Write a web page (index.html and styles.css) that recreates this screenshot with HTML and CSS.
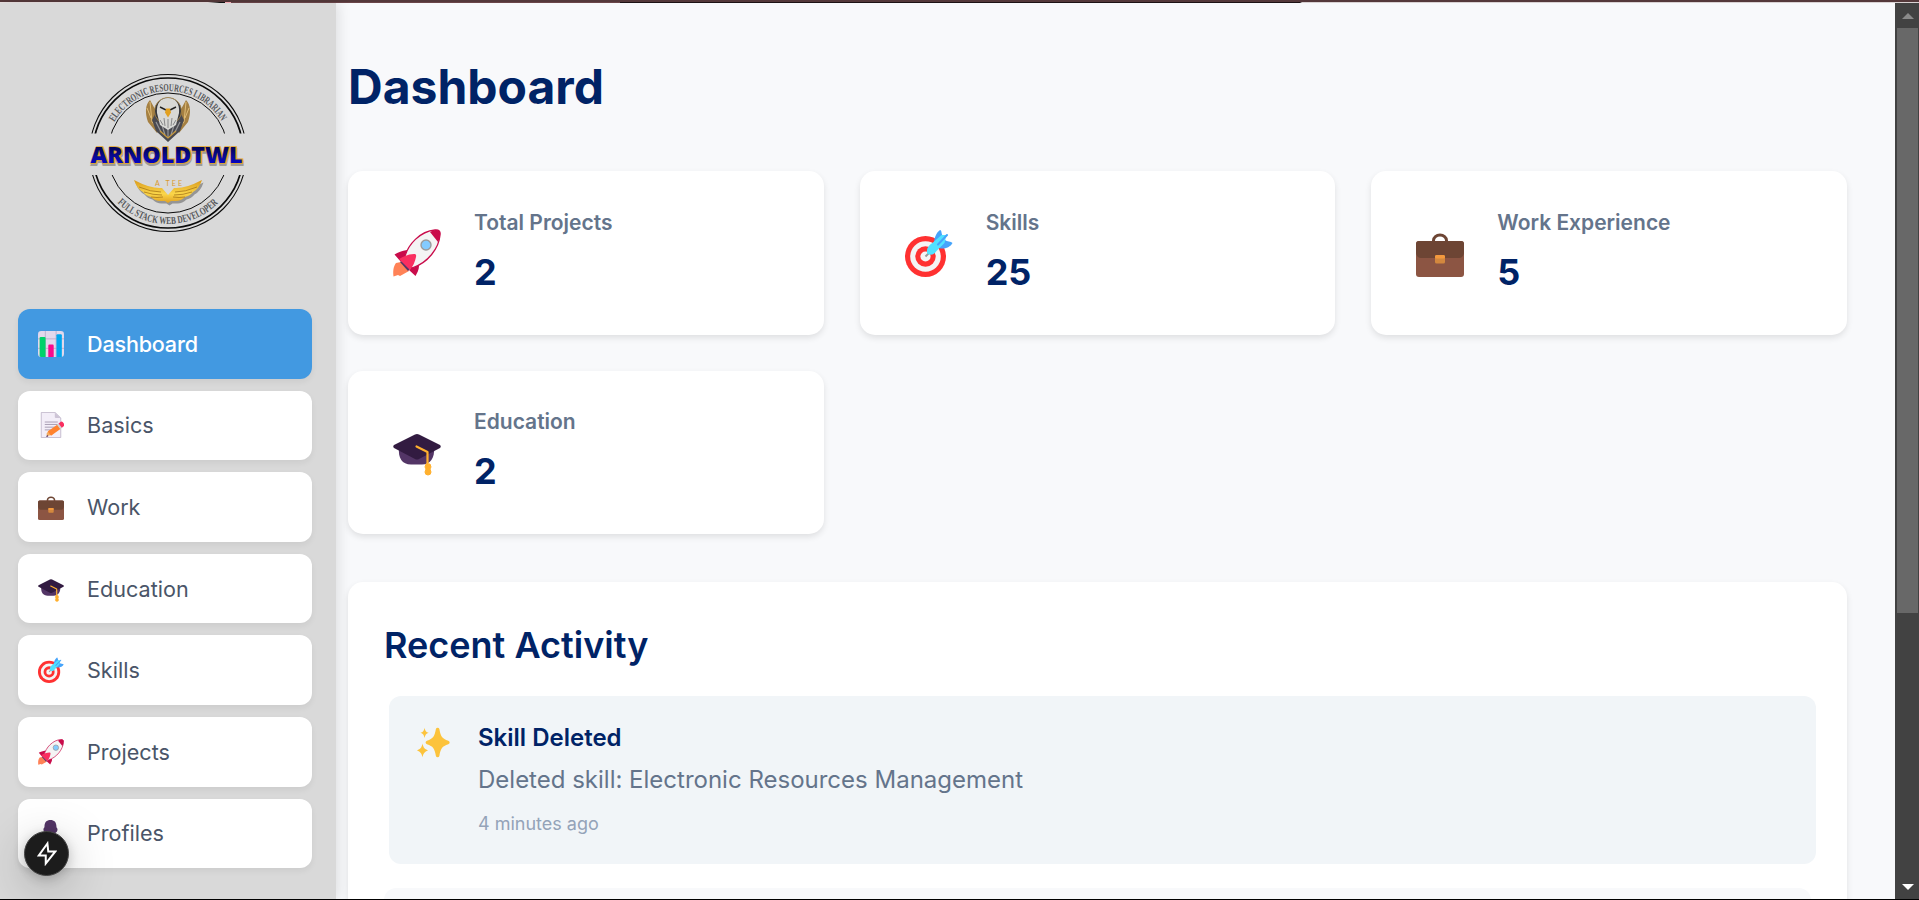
FILE: index.html
```html
<!DOCTYPE html>
<html lang="en">
<head>
<meta charset="utf-8">
<title>Dashboard</title>
<link rel="stylesheet" href="styles.css">
</head>
<body>
<svg class="defs" width="0" height="0" aria-hidden="true">
  <defs>
    <linearGradient id="navy" x1="0" y1="0" x2="0" y2="1"><stop offset=".2" stop-color="#00003c"/><stop offset=".6" stop-color="#0a0a96"/><stop offset=".9" stop-color="#0000d8"/></linearGradient>
    <linearGradient id="gold" x1="0" y1="0" x2="0" y2="1"><stop offset="0" stop-color="#d99a1c"/><stop offset=".6" stop-color="#fbd64a"/><stop offset="1" stop-color="#e0a020"/></linearGradient>
    <symbol id="i-rocket" viewBox="0 0 48 48">
      <path d="M3 34C0 38 0 43 .5 47.500L5 46l2 1 9-5-8-9z" fill="#ff8257"/>
      <path d="M14 21C9 22 5 23 1.500 25.500L8 33l6-7zM26 37c0 4-2 7-3.500 10L16 41l5-5z" fill="#c90c4b"/>
      <path d="M11 31C14 15 28 2 42 1c4-.3 5.500 1 5 5-1 13-12 28-28 33z" fill="#f4f4f4" stroke="#c90c4b" stroke-width="1.300"/>
      <path d="M37 3c9-4 11-1 10 3 0 3-1 5-2 7z" fill="#c90c4b"/>
      <path d="M7 33l2-1 8 8-2 2z" fill="#533566"/>
      <path d="M6 30c5-3 10-5 15-5 2 0 2.500 1 2 3-1 5-3 9-6 13z" fill="#f92f60"/>
      <circle cx="33" cy="16" r="5" fill="#83cbff" stroke="#9b9b9b" stroke-width="1.400"/>
    </symbol>
    <symbol id="i-target" viewBox="0 0 48 48">
      <circle cx="20.500" cy="27.500" r="20.500" fill="#ff3131"/><circle cx="20.500" cy="27.500" r="15.300" fill="#f4f4f4"/><circle cx="20.500" cy="27.500" r="10.200" fill="#ff3131"/><circle cx="20.500" cy="27.500" r="5.100" fill="#f4f4f4"/>
      <path d="M20.500 27.500l5-5" stroke="#9b9b9b" stroke-width="2"/>
      <path d="M29 15c0-6 2-11 6-14 2 0 1 4 3 6l2 4c2 2 6 1 7.500 3-2 4-7 6-12 5.500z" fill="#46a4fb"/>
      <path d="M22.500 25c-2-6 2-9 6-12l8-7 5 0-2 8-8 8c-2 3-5 5-9 3z" fill="#50e2ff"/>
      <path d="M33 15.500l9-9.500" stroke="#46a4fb" stroke-width="2" stroke-linecap="round"/>
    </symbol>
    <symbol id="i-case" viewBox="0 0 48 48">
      <path d="M17.500 13v-1.500a6.500 5.500 0 0 1 13 0V13" fill="none" stroke="#6d4534" stroke-width="3"/>
      <rect x="0" y="12" width="48" height="36" rx="3" fill="#8c5543"/>
      <path d="M3 12h42a3 3 0 0 1 3 3v9q-1 5-5 5H5q-4 0-5-5V15a3 3 0 0 1 3-3z" fill="#6d4534"/>
      <rect x="19" y="26" width="10" height="8.500" rx="1.500" fill="#d3883e"/><rect x="19" y="26" width="10" height="3.500" rx="1.500" fill="#f3993e"/>
    </symbol>
    <symbol id="i-cap" viewBox="0 0 48 48">
      <path d="M6 20h35c1 10-4 16.500-12 16.500H18C9 36.500 5 30 6 20z" fill="#533566"/>
      <path d="M22 6.500q2-1 4 0L47 17q1.500 1.500 0 3L26 31q-2 1-4 0L1 20q-1.500-1.500 0-3z" fill="#321b41"/>
      <path d="M23.500 18.500L34.500 24v14" fill="none" stroke="#ffb02e" stroke-width="2.200" stroke-linecap="round" stroke-linejoin="round"/>
      <path d="M33 36h4l1 3-1 2 1 3a3 3 0 0 1-6 0l1-3-1-2z" fill="#ffb02e" stroke="#ffb02e"/>
    </symbol>
    <symbol id="i-chart" viewBox="0 0 48 48">
      <rect width="48" height="48" rx="6" fill="#e1d8ec"/>
      <path d="M0 14.500h48M0 32h48M13.500 0v48M33.500 0v48" stroke="#b9aac9" stroke-width="1.600"/>
      <path d="M3 13q0-2 2-2h7q2 0 2 2v35H6q-3 0-3-3z" fill="#00d26a"/>
      <path d="M19 27q0-2 2-2h6q2 0 2 2v21H19z" fill="#f70a8d"/>
      <path d="M34 8q0-2 2-2h6q2 0 2 2v40H34z" fill="#00a6ed"/>
    </symbol>
    <symbol id="i-memo" viewBox="0 0 48 48">
      <path d="M6 .8h25.500L42 11v36.200H6z" fill="#f3eef8" stroke="#bdb3c8" stroke-width="1.500"/>
      <path d="M31 1v8q0 2 2 2h9z" fill="#cdc4d6"/>
      <path d="M12.500 18.500h24M12.500 23h24M12.500 28h20M12.500 33h12" stroke="#998ea4" stroke-width="1.500"/>
      <path d="M16 39l5-6 6 8-11 4z" fill="#f3ad61"/><path d="M15 46l2-4 2 3z" fill="#533566"/>
      <path d="M18 36l18-13 6 8-18 13z" fill="#ff822d"/><path d="M35 23.500l4-3 6 8-4 3z" fill="#d3d3d3"/>
      <path d="M38 21l4-3q2-1 4 1l3 4q1 2-1 3l-4 3z" fill="#f92f60"/>
    </symbol>
    <symbol id="i-person" viewBox="0 0 48 48">
      <path d="M10 17c0-2 2-2 2-5C12 4 16 0 23 0s11 4 11 12c0 3 2 3 2 5 0 6-6 9-13 9s-13-3-13-9z" fill="#533566"/>
      <path d="M4 47c0-13 8-18 19-18s19 5 19 18z" fill="#533566"/>
    </symbol>
    <symbol id="i-sparkles" viewBox="0 0 48 48">
      <path d="M30 1q2 0 2.500 2c2 11 4 14 13 17q2 .8 2 2.500t-2 2.500c-9 3-11 6-13 17q-.5 2-2.500 2t-2.500-2c-2-11-4-14-13-17q-2-.8-2-2.500t2-2.500c9-3 11-6 13-17Q28 1 30 1z" fill="#fcc33c"/>
      <path d="M11 1c1 5 2 6 6 7.500-4 1.500-5 3-6 7.500-1-4.500-2-6-6-7.500C9 7 10 6 11 1zM8 24c1.200 6 3 8 8 10-5 2-6.800 4-8 10-1.200-6-3-8-8-10 5-2 6.800-4 8-10z" fill="#fcc33c"/>
    </symbol>
  </defs>
</svg>

<div class="screen">
  <div class="topline"><span class="topline-light"></span><span class="topline-pink"></span><span class="topline-tab"></span><span class="topline-rest"></span></div>
  <div class="window">
    <aside class="sidebar">
      <svg class="logo" viewBox="0 0 200 190" role="img" aria-label="ArnoldTWL">
        <defs>
          <path id="arc-top" d="M44.300 62 A62 62 0 0 1 151.700 62"/>
          <path id="arc-bottom" d="M47.300 142.700 A71 71 0 0 0 148.700 142.700"/>
          <clipPath id="halves"><path d="M0 0h200v73.500H0zM0 115h200v75H0z"/></clipPath>
        </defs>
        <g fill="none" stroke="#0b0b0b" clip-path="url(#halves)">
          <circle cx="98" cy="93" r="78.500" stroke-width="1.100"/>
          <circle cx="98" cy="93" r="75" stroke-width="1.700"/>
          <circle cx="98" cy="93" r="60" stroke-width="1"/>
        </g>
        <text class="logo-ring"><textPath href="#arc-top" textLength="129" lengthAdjust="spacingAndGlyphs">ELECTRONIC RESOURCES LIBRARIAN</textPath></text>
        <text class="logo-ring"><textPath href="#arc-bottom" textLength="112" lengthAdjust="spacingAndGlyphs">FULL STACK WEB DEVELOPER</textPath></text>
        <path d="M80 40c-5 5-5 13-2 22l9 11 6-8-7-14zM116 40c5 5 5 13 2 22l-9 11-6-8 7-14z" fill="#a58042"/>
        <path d="M80 42l2 20 7 8M77 48l4 10M116 42l-2 20-7 8M119 48l-4 10" stroke="#e0bd78" stroke-width="1" fill="none"/>
        <path d="M82 60l4-8 12 7 12-7 4 8-4 11-12 11-12-11z" fill="#4a4a50"/>
        <path d="M86 62l5 10M91 62l4 13M110 62l-5 10M105 62l-4 13M98 62v16" stroke="#96969a" stroke-width="1.200"/>
        <circle cx="98" cy="51" r="13.500" fill="#36373c" stroke="#b38b43" stroke-width=".8"/>
        <path d="M87 53c-1-10 4-15 11-15s12 5 11 15l-3 12-8 5-8-5z" fill="#d8d8d5"/>
        <path d="M90 60l3 5M106 60l-3 5M94 58l1 8M102 58l-1 8M98 59v9" stroke="#88888a"/>
        <path d="M90 47l6 3M106 47l-6 3" stroke="#222" stroke-width="1.400"/>
        <path d="M96 48.500h4l1 4-3 5-3-5z" fill="#e2a020"/>
        <path d="M90 71l8 7 8-7" fill="none" stroke="#c99a3d" stroke-width="1.200"/>
        <text class="logo-name logo-shadow" x="21.500" y="104.500" textLength="152" lengthAdjust="spacingAndGlyphs">ARNOLDTWL</text>
        <text class="logo-name logo-edge" x="21.500" y="103" textLength="152" lengthAdjust="spacingAndGlyphs">ARNOLDTWL</text>
        <text class="logo-name" x="20.500" y="102.500" textLength="152" lengthAdjust="spacingAndGlyphs">ARNOLDTWL</text>
        <path d="M64 121q17 9 28 8l6 7 6-7q11 1 28-8-3 9-9 12-3 4-8 5-4 4-9 4l-5 0-3 2-3-2-5 0q-5 0-9-4-5-1-8-5-6-3-9-12z" fill="#777" opacity=".7" transform="translate(1.500 1.500)"/>
        <path d="M64 120q17 9 28 8l6 7 6-7q11 1 28-8-3 9-9 12-3 4-8 5-4 4-9 4l-5 0-3 2-3-2-5 0q-5 0-9-4-5-1-8-5-6-3-9-12z" fill="url(#gold)"/>
        <path d="M69 127q12 5 22 5M74 132q9 3 18 3M81 137q6 1 12 0M127 127q-12 5-22 5M122 132q-9 3-18 3M115 137q-6 1-12 0" fill="none" stroke="#a77718" stroke-width=".8"/>
        <text class="logo-sub" x="85" y="125.500" textLength="27">A TEE</text>
      </svg>
      <nav class="nav">
        <a class="nav-item nav-item-active"><svg class="nav-icon"><use href="#i-chart"/></svg><span>Dashboard</span></a>
        <a class="nav-item"><svg class="nav-icon"><use href="#i-memo"/></svg><span>Basics</span></a>
        <a class="nav-item"><svg class="nav-icon"><use href="#i-case"/></svg><span>Work</span></a>
        <a class="nav-item"><svg class="nav-icon"><use href="#i-cap"/></svg><span>Education</span></a>
        <a class="nav-item"><svg class="nav-icon"><use href="#i-target"/></svg><span>Skills</span></a>
        <a class="nav-item"><svg class="nav-icon"><use href="#i-rocket"/></svg><span>Projects</span></a>
        <a class="nav-item"><svg class="nav-icon"><use href="#i-person"/></svg><span>Profiles</span></a>
      </nav>
    </aside>
    <main class="main">
      <h1 class="title">Dashboard</h1>
      <section class="stats">
        <article class="card"><svg class="card-icon"><use href="#i-rocket"/></svg><div><h3 class="card-label">Total Projects</h3><p class="card-value">2</p></div></article>
        <article class="card"><svg class="card-icon"><use href="#i-target"/></svg><div><h3 class="card-label">Skills</h3><p class="card-value">25</p></div></article>
        <article class="card"><svg class="card-icon"><use href="#i-case"/></svg><div><h3 class="card-label">Work Experience</h3><p class="card-value">5</p></div></article>
        <article class="card"><svg class="card-icon"><use href="#i-cap"/></svg><div><h3 class="card-label">Education</h3><p class="card-value">2</p></div></article>
      </section>
      <section class="activity">
        <h2 class="activity-title">Recent Activity</h2>
        <div class="activity-item activity-item-hover">
          <svg class="activity-icon"><use href="#i-sparkles"/></svg>
          <div>
            <h4 class="activity-name">Skill Deleted</h4>
            <p class="activity-text">Deleted skill: Electronic Resources Management</p>
            <p class="activity-time">4 minutes ago</p>
          </div>
        </div>
        <div class="activity-item"></div>
      </section>
    </main>
    <div class="scrollbar">
      <svg class="scroll-arrow" viewBox="0 0 12 6"><path d="M0 6L6 0l6 6z" fill="#8a8a8a"/></svg>
      <div class="scroll-thumb"></div>
      <svg class="scroll-arrow scroll-arrow-down" viewBox="0 0 12 6"><path d="M0 0h12L6 6z" fill="#fff"/></svg>
    </div>
  </div>
  <div class="bottomline"></div>
  <div class="dev-badge"><svg viewBox="0 0 24 28" width="20" height="25"><path d="M12.500 2L2 16.500h8.500V26L22 11.500h-8.500z" fill="none" stroke="#fff" stroke-width="2.400" stroke-linejoin="miter"/></svg></div>
</div>
</body>
</html>
```
FILE: styles.css
```css
* { box-sizing: border-box; }
body { margin: 0; font-family: Inter, "Liberation Sans", sans-serif; color: #002366; }
h1, h2, h3, h4, p { margin: 0; }
.defs { position: absolute; }
.screen { position: relative; width: 1919px; height: 900px; display: flex; flex-direction: column; overflow: hidden; background: #f8f9fb; }

.topline { flex: none; height: 3px; display: flex; align-items: flex-end; background: #54383a; }
.topline span { height: 1px; }
.topline-light { width: 225px; background: linear-gradient(90deg, #e8e0e0 208px, #111 220px); }
.topline-pink { width: 6px; background: #ffb3bd; }
.topline-tab { width: 389px; background: #6a4549; }
.topline-rest { flex: 1; background: linear-gradient(90deg, #1c1215 680px, #d9d2d3 682px); }
.bottomline { flex: none; height: 1px; background: #000; }
.window { flex: 1; min-height: 0; display: flex; }

.sidebar { flex: none; width: 336px; background: #d9d9d9; box-shadow: 3px 0 12px rgba(0, 0, 0, .1); display: flex; flex-direction: column; padding: 57px 24px 0 18px; z-index: 1; }
.logo { width: 200px; height: 190px; margin-left: 52px; overflow: visible; }
.logo-ring { font: 700 10.500px "Liberation Serif", serif; fill: #55575a; }
.logo-name { font: 800 23.500px "Open Sans", sans-serif; fill: url(#navy); }
.logo-edge { fill: #e2a52c; stroke: #e2a52c; stroke-width: 1.600px; }
.logo-shadow { fill: #66625b; stroke: #77736b; stroke-width: 2px; opacity: .6; }
.logo-sub { font: 400 7px Lato, sans-serif; fill: #d99a2e; }

.nav { display: flex; flex-direction: column; gap: 12px; margin-top: 59px; }
.nav-item { height: 69.600px; display: flex; align-items: center; gap: 23px; padding-left: 20px; border-radius: 12px; background: #fff; color: #4a5568; font-size: 21.600px; box-shadow: 0 3px 6px rgba(0, 0, 0, .06); }
.nav-item-active { background: #4299e1; color: #fff; font-weight: 500; letter-spacing: -.2px; }
.nav-icon { width: 26px; height: 26px; flex: none; overflow: visible; }

.main { flex: 1; padding: 48px 48px 0 12px; }
.title { font-size: 48px; line-height: 72px; font-weight: 700; }
.stats { display: grid; grid-template-columns: repeat(3, 1fr); grid-auto-rows: 163.500px; gap: 36px; margin-top: 48px; }
.card { display: flex; align-items: center; gap: 33px; padding: 0 45px; background: #fff; border-radius: 15px; box-shadow: 0 3px 6px rgba(0, 0, 0, .1); }
.card-icon { width: 48px; height: 48px; flex: none; }
.card-label { font-size: 21px; line-height: 32.400px; font-weight: 600; color: #64748b; }
.card-value { font-size: 36px; line-height: 54px; font-weight: 700; margin-top: 5.500px; }
.activity { margin-top: 48px; height: 700px; padding: 36px; background: #fff; border-radius: 15px; box-shadow: 0 3px 6px rgba(0, 0, 0, .1); }
.activity-title { font-size: 36px; line-height: 54px; font-weight: 600; }
.activity-item { display: flex; gap: 28px; height: 168px; margin-top: 24px; padding: 24px 28px; border-radius: 12px; background: #f8f9fb; }
.activity-item-hover { margin-left: 5px; margin-right: -4.500px; background: #f1f5f8; }
.activity-icon { width: 33px; height: 33px; flex: none; margin-top: 7px; }
.activity-name { font-size: 24px; line-height: 36px; font-weight: 600; }
.activity-text { font-size: 24px; line-height: 36px; color: #64748b; margin-top: 6px; }
.activity-time { font-size: 18px; line-height: 27px; color: #94a3b8; margin-top: 12px; }

.scrollbar { flex: none; width: 24px; background: #424242; display: flex; flex-direction: column; align-items: center; padding: 10px 1px 9px 2px; }
.scroll-arrow { width: 12px; height: 6px; flex: none; }
.scroll-thumb { width: 21px; height: 585px; margin-top: 9px; background: #686868; }
.scroll-arrow-down { margin-top: auto; }

.dev-badge { position: absolute; z-index: 2; left: 24px; top: 831px; width: 45px; height: 45px; border-radius: 50%; background: #1c1c1c; border: 1px solid #454545; display: flex; align-items: center; justify-content: center; box-shadow: 0 12px 48px rgba(0, 0, 0, .25), 0 3px 12px rgba(0, 0, 0, .2); }
```
